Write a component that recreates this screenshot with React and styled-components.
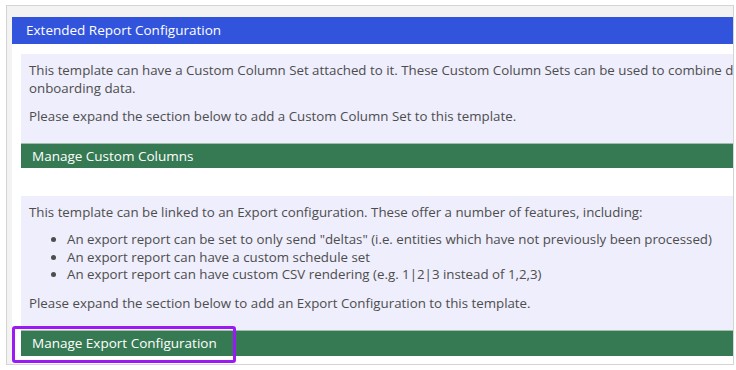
import React from "react";
import styled, { createGlobalStyle } from "styled-components";

const Global = createGlobalStyle`
  html, body { margin: 0; padding: 0; background: #ffffff; }
  body { font-family: "Open Sans", "Noto Sans", sans-serif; }
`;

const Frame = styled.div`
  position: relative;
  margin: 5px 2px 0 6px;
  height: 360px;
  box-sizing: border-box;
  border: 1px solid #d4d4d4;
  background: #f3f3f3;
  padding: 11px 0 0 5px;
  overflow: hidden;
`;

const Content = styled.div`
  background: #ffffff;
  height: 100%;
  display: flex;
  flex-direction: column;
`;

const BlueHeader = styled.div`
  background: #3254dc;
  color: #ffffff;
  height: 27px;
  line-height: 27px;
  padding-left: 14px;
  font-size: 13.5px;
  white-space: nowrap;
`;

const Section = styled.div`
  padding: 10px 0 0 9px;
  display: flex;
  flex-direction: column;
`;

const Panel = styled.div`
  background: #eeeefc;
  width: 780px;
  padding: ${(p) => p.$pad};
  color: #4d4d4d;
  font-size: 13.3px;
  line-height: 18px;
  margin-top: ${(p) => p.$mt || "0px"};
`;

const Para = styled.p`
  margin: 0 0 10px 0;
  white-space: nowrap;
  &:last-child { margin-bottom: 0; }
`;

const List = styled.ul`
  margin: 0 0 10.5px 0;
  padding-left: 38px;
  line-height: 17.5px;
  white-space: nowrap;
`;

const GreenHeader = styled.div`
  background: #367a53;
  border-top: 1px solid #9fbfa9;
  color: #ffffff;
  height: ${(p) => p.$h};
  line-height: ${(p) => p.$h};
  padding-left: 11px;
  font-size: 13.5px;
  white-space: nowrap;
`;

const Highlight = styled.div`
  position: absolute;
  left: 5px;
  top: 320px;
  width: 224px;
  height: 37px;
  box-sizing: border-box;
  border: 3px solid #9b19f2;
  border-radius: 3px;
  pointer-events: none;
`;

export default function App() {
  return (
    <>
      <Global />
      <Frame>
        <Content>
          <BlueHeader>Extended Report Configuration</BlueHeader>
          <Section>
            <Panel $pad="7px 8px 18px 8px">
              <Para>
                This template can have a Custom Column Set attached to it. These Custom Column Sets can be used to combine data from<br />
                onboarding data.
              </Para>
              <Para>Please expand the section below to add a Custom Column Set to this template.</Para>
            </Panel>
            <GreenHeader $h="24px">Manage Custom Columns</GreenHeader>
            <Panel $pad="7px 8px 18px 8px" $mt="28px">
              <Para>This template can be linked to an Export configuration. These offer a number of features, including:</Para>
              <List>
                <li>An export report can be set to only send "deltas" (i.e. entities which have not previously been processed)</li>
                <li>An export report can have a custom schedule set</li>
                <li>An export report can have custom CSV rendering (e.g. 1|2|3 instead of 1,2,3)</li>
              </List>
              <Para>Please expand the section below to add an Export Configuration to this template.</Para>
            </Panel>
            <GreenHeader $h="25px">Manage Export Configuration</GreenHeader>
          </Section>
        </Content>
        <Highlight />
      </Frame>
    </>
  );
}
